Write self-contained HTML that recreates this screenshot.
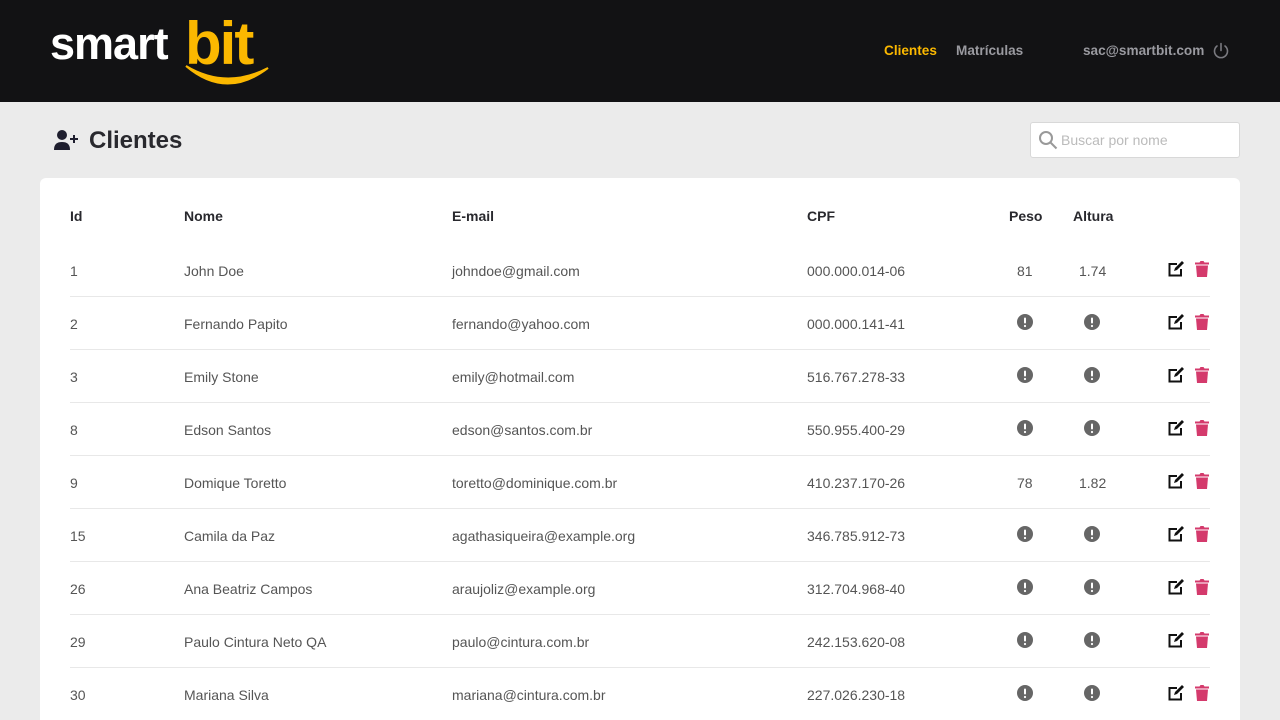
<!DOCTYPE html>
<html><head><meta charset="utf-8"><style>
*{margin:0;padding:0;box-sizing:border-box}
html,body{width:1280px;height:720px;overflow:hidden}
body{background:#ebebeb;font-family:"Liberation Sans",Arial,sans-serif;position:relative}
.hdr{position:absolute;left:0;top:0;width:1280px;height:102px;background:#121214}
.t{position:absolute;white-space:nowrap}
.card{position:absolute;left:40px;top:178px;width:1200px;height:560px;background:#fff;border-radius:6px}
.row{position:absolute;left:70px;width:1140px;height:53px;border-bottom:1px solid #e8e8e8;font-size:14px;color:#555}
.row .t{top:19px}
.th{font-weight:bold;color:#29292e;font-size:14px}
</style></head><body>
<div class="hdr">
 <div class="t" style="left:50px;top:18px;font-size:45px;font-weight:bold;color:#fff;letter-spacing:-1px">smart</div>
 <div class="t" style="left:185px;top:9px;font-size:60px;font-weight:bold;color:#fbb800;letter-spacing:-2px">bit</div>
 <svg style="position:absolute;left:184px;top:62px" width="88" height="28"><path d="M2 4 Q42 38 84 6 Q42 28 2 4Z" fill="#fbb800" stroke="#fbb800" stroke-width="2"/></svg>
 <div class="t" style="left:884px;top:43px;font-size:13.6px;font-weight:bold;color:#fbb800">Clientes</div>
 <div class="t" style="left:956px;top:43px;font-size:13.6px;font-weight:bold;color:#9a9aa0">Matrículas</div>
 <div class="t" style="left:1083px;top:43px;font-size:13.6px;font-weight:bold;color:#9a9aa0">sac@smartbit.com</div>
 <svg style="position:absolute;left:1212px;top:42px" width="18" height="18" viewBox="0 0 18 18" fill="none" stroke="#7a7a80" stroke-width="1.6" stroke-linecap="round"><path d="M9 1.5v7"/><path d="M5 4a6.5 6.5 0 1 0 8 0"/></svg>
</div>
<svg style="position:absolute;left:54px;top:129px" width="26" height="22" viewBox="0 0 26 22" fill="#1e1e2e"><circle cx="8" cy="6" r="5"/><path d="M0 21c0-6 3-8 8-8s8 2 8 8z"/><path d="M19 6h2v3h3v2h-3v3h-2v-3h-3V9h3z"/></svg>
<div class="t" style="left:89px;top:127px;font-size:24px;font-weight:bold;color:#29292e">Clientes</div>
<div style="position:absolute;left:1030px;top:122px;width:210px;height:36px;background:#fff;border:1px solid #d8d8d8;border-radius:3px"></div>
<svg style="position:absolute;left:1038px;top:130px" width="20" height="20" viewBox="0 0 20 20" fill="none" stroke="#999" stroke-width="2"><circle cx="8" cy="8" r="6"/><path d="M12.5 12.5l6 6"/></svg>
<div class="t" style="left:1061px;top:132px;font-size:14px;color:#bbb">Buscar por nome</div>
<div class="card"></div>
<div class="t th" style="left:70px;top:208px">Id</div>
<div class="t th" style="left:184px;top:208px">Nome</div>
<div class="t th" style="left:452px;top:208px">E-mail</div>
<div class="t th" style="left:807px;top:208px">CPF</div>
<div class="t th" style="left:1009px;top:208px">Peso</div>
<div class="t th" style="left:1073px;top:208px">Altura</div>
<div id="rows"></div>
<script>
var d=[["1","John Doe","johndoe@gmail.com","000.000.014-06","81","1.74"],["2","Fernando Papito","fernando@yahoo.com","000.000.141-41"],["3","Emily Stone","emily@hotmail.com","516.767.278-33"],["8","Edson Santos","edson@santos.com.br","550.955.400-29"],["9","Domique Toretto","toretto@dominique.com.br","410.237.170-26","78","1.82"],["15","Camila da Paz","agathasiqueira@example.org","346.785.912-73"],["26","Ana Beatriz Campos","araujoliz@example.org","312.704.968-40"],["29","Paulo Cintura Neto QA","paulo@cintura.com.br","242.153.620-08"],["30","Mariana Silva","mariana@cintura.com.br","227.026.230-18"]];
var ex='<svg width="16" height="16" viewBox="0 0 16 16"><circle cx="8" cy="8" r="8" fill="#666"/><rect x="7" y="3.5" width="2" height="6" rx="1" fill="#fff"/><circle cx="8" cy="12" r="1.1" fill="#fff"/></svg>';
var ed='<svg width="17" height="16" viewBox="0 0 17 16"><path d="M9 3H1.5v11.5H13V8" fill="none" stroke="#111" stroke-width="2"/><path d="M6 10l1-3 7-7 2 2-7 7z" fill="#111"/></svg>';
var tr='<svg width="14" height="16" viewBox="0 0 14 16" fill="#d43a6c"><path d="M0 1.5h4.5L5.5 0h3l1 1.5H14V3.5H0z"/><path d="M1 4.5h12l-1 11.5H2z"/></svg>';
var h='';
d.forEach(function(r,i){var y=244+i*53;
h+='<div class="row" style="top:'+y+'px"><div class="t" style="left:0">'+r[0]+'</div><div class="t" style="left:114px">'+r[1]+'</div><div class="t" style="left:382px">'+r[2]+'</div><div class="t" style="left:737px">'+r[3]+'</div>';
if(r[4]){h+='<div class="t" style="left:947px">'+r[4]+'</div><div class="t" style="left:1009px">'+r[5]+'</div>';}
else{h+='<div class="t" style="left:947px;top:70px;top:17px">'+ex+'</div><div class="t" style="left:1014px;top:17px">'+ex+'</div>';}
h+='<div class="t" style="left:1098px;top:17px">'+ed+'</div><div class="t" style="left:1125px;top:17px">'+tr+'</div></div>';});
document.getElementById('rows').innerHTML=h;
</script>
</body></html>
